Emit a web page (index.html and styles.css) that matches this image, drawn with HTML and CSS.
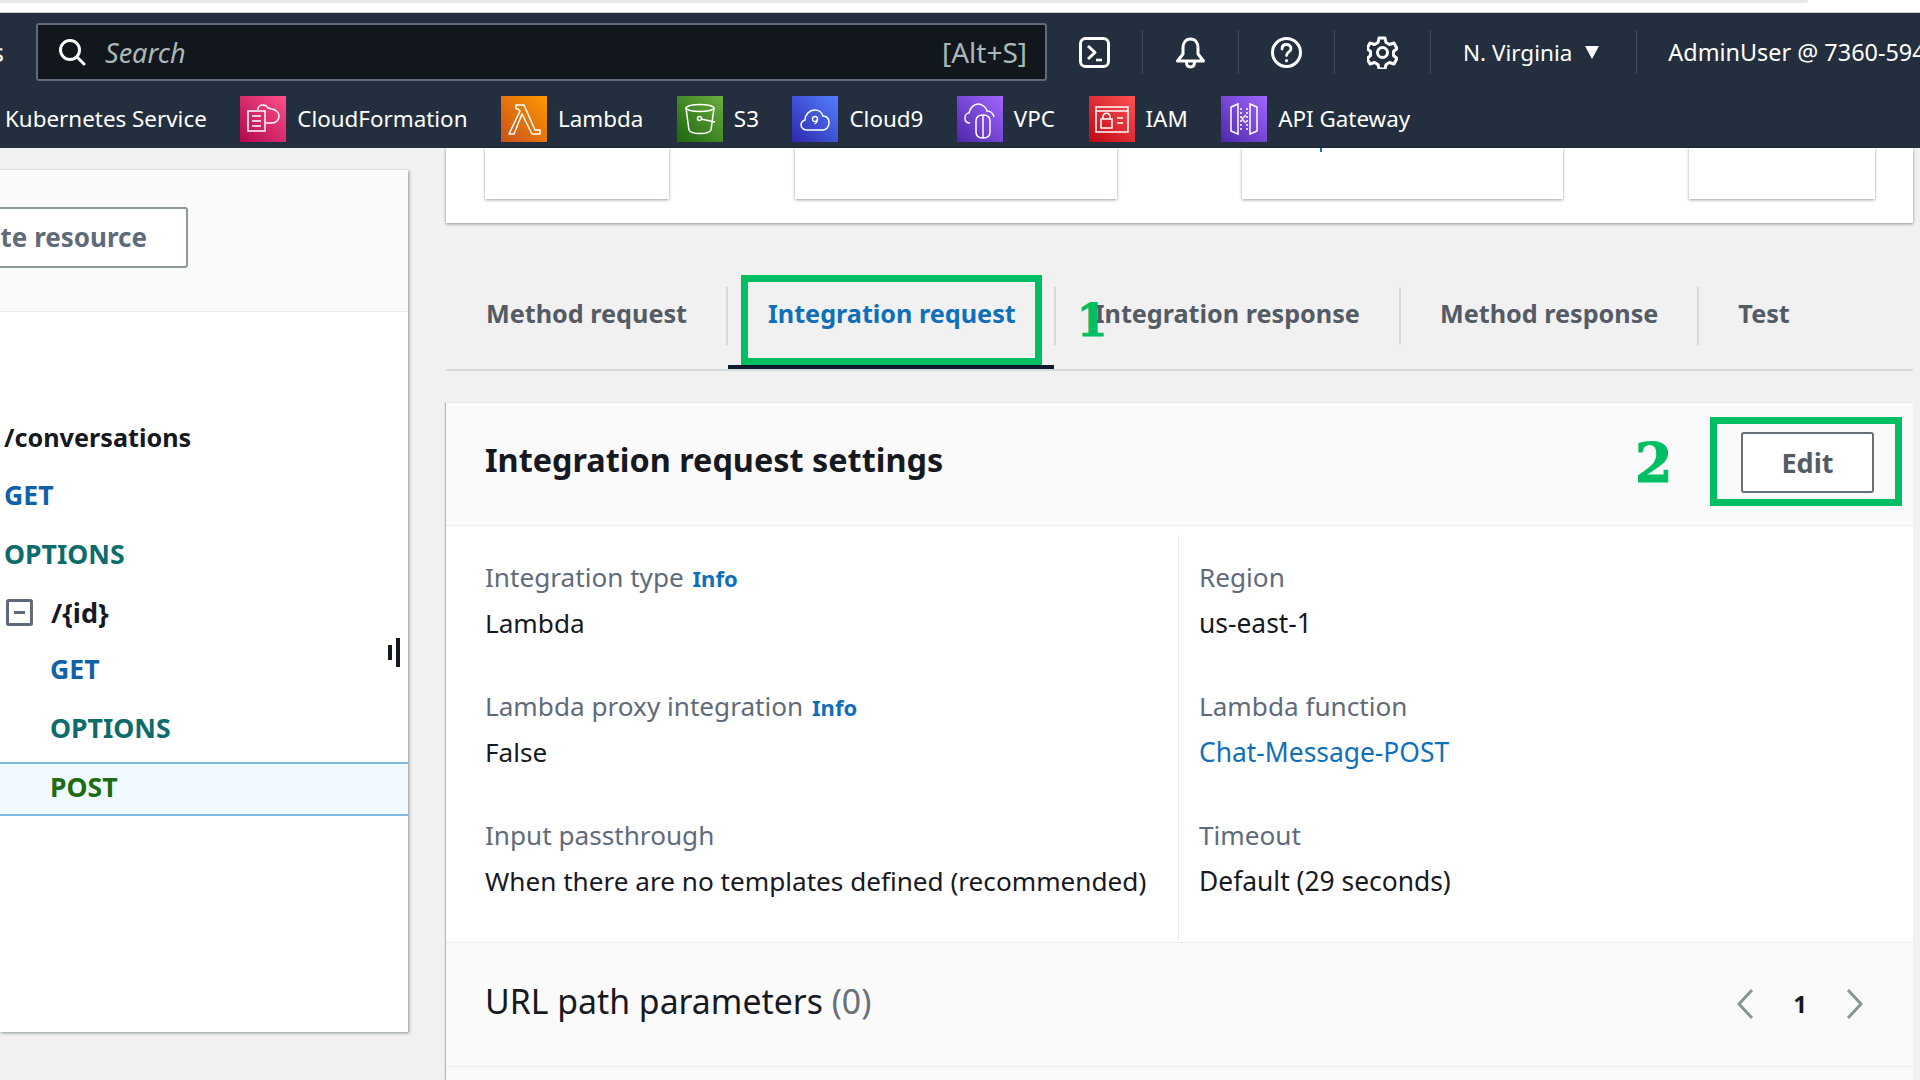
FILE: index.html
```html
<!DOCTYPE html>
<html lang="en">
<head>
    <meta charset="UTF-8">
    <meta name="viewport" content="width=device-width, initial-scale=1.0">
    <title>API Gateway - Integration request</title>
    <link rel="stylesheet" href="styles.css">
</head>
<body>
    <div class="top-strip"><div class="top-strip-bar"></div></div>

    <header class="console-nav">
        <div class="nav-row">
            <div class="nav-clip"><span>Services</span></div>
            <div class="search-box">
                <svg class="search-icon" viewBox="0 0 28 28" fill="none" stroke="#fff" stroke-width="3" stroke-linecap="round">
                    <circle cx="12" cy="12" r="9.5"/>
                    <path d="M19 19l7 7"/>
                </svg>
                <span class="search-text">Search</span>
                <span class="search-key">[Alt+S]</span>
            </div>
            <svg class="tool-icon" viewBox="0 0 31 31" fill="none" stroke="#fff" stroke-width="3" stroke-linejoin="round">
                <rect x="1.5" y="1.5" width="28" height="28" rx="5"/>
                <path d="M9 9l7 6.5-7 6.5"/>
                <path d="M17 23h6" stroke-width="2.6"/>
            </svg>
            <div class="nav-sep"></div>
            <svg class="tool-icon" viewBox="0 0 31 33" fill="none" stroke="#fff" stroke-width="3" stroke-linejoin="round">
                <path d="M15.500 3c-5 0-7.500 4-7.500 9v6l-5.500 7h26l-5.500-7v-6c0-5-2.500-9-7.500-9z"/>
                <path d="M11.500 26c0 3 1.500 5 4 5s4-2 4-5"/>
            </svg>
            <div class="nav-sep"></div>
            <svg class="tool-icon" viewBox="0 0 31 31" fill="none" stroke="#fff" stroke-width="3" stroke-linecap="round">
                <circle cx="15.500" cy="15.500" r="14"/>
                <path d="M11 12c0-3 2-4.500 4.500-4.500s4.500 1.500 4.500 4c0 3.500-4.500 3.500-4.500 7" stroke-width="2.800"/>
                <path d="M15.500 23.500v.2" stroke-width="3.200"/>
            </svg>
            <div class="nav-sep"></div>
            <svg class="tool-icon" viewBox="0 0 31 33" fill="none" stroke="#fff" stroke-width="3" stroke-linejoin="round">
                <path d="M12.500 2h6l1 4.500 3.500 2 4.500-1.500 3 5.500-3.500 3v4l3.500 3-3 5.500-4.500-1.500-3.500 2-1 4.500h-6l-1-4.500-3.500-2-4.500 1.500-3-5.500 3.500-3v-4l-3.500-3 3-5.500 4.500 1.500 3.500-2z" transform="translate(-.5 0)"/>
                <circle cx="15.500" cy="16.500" r="5"/>
            </svg>
            <div class="nav-sep"></div>
            <span class="nav-region">N. Virginia</span>
            <svg class="region-caret" viewBox="0 0 14 14"><path d="M0 1h14L7 14z" fill="#fff"/></svg>
            <div class="nav-sep nav-sep-user"></div>
            <span class="nav-user">AdminUser @ 7360-594</span>
        </div>
        <div class="nav-row nav-row-fav">
            <span class="fav-label fav-first">Kubernetes Service</span>

            <span class="fav-icon fav-pink">
                <svg viewBox="0 0 46 46" fill="none" stroke="#fff" stroke-width="1.500">
                    <path d="M8 15h17v20H8z"/>
                    <path d="M12 20h9M12 25h9M12 30h9"/>
                    <path d="M18 14v-1c0-2 2-4 5-4 2 0 4 1 5 3 1 0 2 0 3 1 4 0 8 3 8 7s-3 7-7 7h-6"/>
                </svg>
            </span>
            <span class="fav-label">CloudFormation</span>

            <span class="fav-icon fav-orange">
                <svg viewBox="0 0 46 46" fill="none" stroke="#fff" stroke-width="1.500" stroke-linejoin="round">
                    <path d="M15 9h8l11 25h5v4h-8L21 18l-8 20H8l11-23-2-2h-2z"/>
                </svg>
            </span>
            <span class="fav-label">Lambda</span>

            <span class="fav-icon fav-green">
                <svg viewBox="0 0 46 46" fill="none" stroke="#fff" stroke-width="1.500">
                    <ellipse cx="23" cy="12" rx="14" ry="3.500"/>
                    <path d="M9 12l3 22c1 2 6 3.500 11 3.500s10-1.500 11-3.500l3-22"/>
                    <circle cx="22.500" cy="22.500" r="2"/>
                    <path d="M24 23l14 3"/>
                </svg>
            </span>
            <span class="fav-label">S3</span>

            <span class="fav-icon fav-blue">
                <svg viewBox="0 0 46 46" fill="none" stroke="#fff" stroke-width="1.500">
                    <path d="M15 34c-3 0-6-2-6-5 0-2 1-4 4-5 0-5 4-10 10-10 4 0 7 3 8 6 4 0 6 3 6 7s-3 7-6 7z"/>
                    <circle cx="23" cy="23" r="2.500" stroke-width="1.300"/>
                    <path d="M25.500 23c0 3-1 4-3 5" stroke-width="1.300"/>
                </svg>
            </span>
            <span class="fav-label">Cloud9</span>

            <span class="fav-icon fav-purple">
                <svg viewBox="0 0 46 46" fill="none" stroke="#fff" stroke-width="1.500">
                    <path d="M13 27c-3 0-5-2-5-5 0-3 2-5 4-5 1-5 5-9 9-9s8 3 9 7c3 0 6 2 7 6"/>
                    <path d="M19 25c0-4 3-6 7-6s7 2 7 6v11c0 4-3 6-7 6s-7-2-7-6z"/>
                    <path d="M26 19v23"/>
                </svg>
            </span>
            <span class="fav-label">VPC</span>

            <span class="fav-icon fav-red">
                <svg viewBox="0 0 46 46" fill="none" stroke="#fff" stroke-width="1.500">
                    <path d="M7 11h32v25H7z"/>
                    <path d="M7 15h32"/>
                    <path d="M12 23h11v9H12z"/>
                    <path d="M14 23v-2c0-5 7-5 7 0v2"/>
                    <path d="M28 22h6M28 27h6"/>
                </svg>
            </span>
            <span class="fav-label">IAM</span>

            <span class="fav-icon fav-purple">
                <svg viewBox="0 0 46 46" fill="none" stroke="#fff" stroke-width="1.500">
                    <path d="M10 11l7-3v30l-7-3z"/>
                    <path d="M36 11l-7-3v30l7-3z"/>
                    <path d="M20 12v22M26 12v22" stroke-dasharray="2 2"/>
                    <path d="M25 19l-4 4 4 4"/>
                </svg>
            </span>
            <span class="fav-label">API Gateway</span>
        </div>
    </header>

    <main class="page">
        <aside class="resources">
            <div class="resources-head">
                <button class="res-button">Create resource</button>
            </div>
            <div class="tree">
                <div class="tree-row tree-path">/conversations</div>
                <div class="tree-row method method-get">GET</div>
                <div class="tree-row method method-options">OPTIONS</div>
                <div class="tree-row tree-path tree-toggle-row">
                    <svg class="tree-toggle" viewBox="0 0 27 27" fill="none" stroke="#5f6b7a" stroke-width="3">
                        <rect x="1.500" y="1.500" width="24" height="24" rx="1"/>
                        <path d="M8 13.500h11"/>
                    </svg>
                    /{id}
                </div>
                <div class="tree-row tree-sub method method-get">GET</div>
                <div class="tree-row tree-sub method method-options">OPTIONS</div>
                <div class="tree-row tree-sub method method-post tree-selected">POST</div>
                <div class="drag-handle"><span></span><span></span></div>
            </div>
        </aside>

        <section class="content">
            <div class="top-card">
                <div class="stub-box"></div>
                <div class="stub-box"></div>
                <div class="stub-box"><i class="stub-tick"></i></div>
                <div class="stub-box"></div>
            </div>

            <nav class="tabs">
                <a class="tab">Method request</a>
                <div class="tab-sep"></div>
                <a class="tab tab-active">Integration request<span class="mark-box mark-tab"></span></a>
                <div class="tab-sep"></div>
                <a class="tab">Integration response<span class="mark-num mark-one">1</span></a>
                <div class="tab-sep"></div>
                <a class="tab">Method response</a>
                <div class="tab-sep"></div>
                <a class="tab">Test</a>
            </nav>

            <div class="card">
                <div class="card-head">
                    <h2>Integration request settings</h2>
                    <span class="mark-num mark-two">2</span>
                    <span class="mark-box mark-edit"></span>
                    <button class="edit-button">Edit</button>
                </div>
                <div class="settings">
                    <div class="settings-col settings-left">
                        <div class="field">
                            <div class="field-label">Integration type <a class="info">Info</a></div>
                            <div class="field-value">Lambda</div>
                        </div>
                        <div class="field">
                            <div class="field-label">Lambda proxy integration <a class="info">Info</a></div>
                            <div class="field-value">False</div>
                        </div>
                        <div class="field">
                            <div class="field-label">Input passthrough</div>
                            <div class="field-value">When there are no templates defined (recommended)</div>
                        </div>
                    </div>
                    <div class="settings-col settings-right">
                        <div class="field">
                            <div class="field-label">Region</div>
                            <div class="field-value">us-east-1</div>
                        </div>
                        <div class="field">
                            <div class="field-label">Lambda function</div>
                            <div class="field-value"><a class="link">Chat-Message-POST</a></div>
                        </div>
                        <div class="field">
                            <div class="field-label">Timeout</div>
                            <div class="field-value">Default (29 seconds)</div>
                        </div>
                    </div>
                </div>
                <div class="params-head">
                    <h3>URL path parameters <span class="count">(0)</span></h3>
                    <div class="pager">
                        <svg viewBox="0 0 20 32" fill="none" stroke="#879596" stroke-width="3"><path d="M17 2L4 16l13 14"/></svg>
                        <span class="pager-num">1</span>
                        <svg viewBox="0 0 20 32" fill="none" stroke="#879596" stroke-width="3"><path d="M3 2l13 14L3 30"/></svg>
                    </div>
                </div>
                <div class="params-rest"></div>
            </div>
        </section>
    </main>
</body>
</html>
```

FILE: styles.css
```css
* {
    box-sizing: border-box;
}

html, body {
    margin: 0;
    padding: 0;
    height: 1080px;
    overflow: hidden;
}

body {
    width: 1920px;
    font-family: "Noto Sans", "Open Sans", sans-serif;
    font-size: 26.15px;
    color: #16191f;
    background-color: #f1f1f1;
}

/* strip of the browser above the console */
.top-strip {
    height: 13px;
    background-color: #fff;
    border-bottom: 1px solid #c9c9c9;
}

.top-strip-bar {
    width: 1808px;
    height: 3px;
    background-color: #e8e8e8;
    border-radius: 0 0 3px 0;
}

/* console header */
.console-nav {
    background-color: #232f3e;
    color: #fff;
}

.nav-row {
    display: flex;
    align-items: center;
    height: 78px;
    white-space: nowrap;
}

.nav-clip {
    display: flex;
    justify-content: flex-end;
    width: 4px;
    margin-right: 32px;
    overflow: hidden;
    flex-shrink: 0;
}

.search-box {
    display: flex;
    align-items: center;
    width: 1011px;
    height: 58px;
    margin-right: 32px;
    padding: 0 18px 0 20px;
    background-color: #12171e;
    border: 2px solid #5f6b7a;
    border-radius: 3px;
    flex-shrink: 0;
}

.search-icon {
    width: 28px;
    height: 28px;
    margin-right: 19px;
}

.search-text {
    flex: 1;
    font-size: 27px;
    font-style: italic;
    color: #aab7b8;
}

.search-key {
    font-size: 28px;
    color: #aab7b8;
}

.tool-icon {
    width: 31px;
    height: 33px;
    flex-shrink: 0;
}

.nav-sep {
    width: 1px;
    height: 44px;
    margin: 0 32px;
    background-color: #414d5c;
    flex-shrink: 0;
}

.nav-region {
    font-size: 22.5px;
}

.region-caret {
    width: 14px;
    height: 14px;
    margin-left: 13px;
    flex-shrink: 0;
}

.nav-sep-user {
    margin: 0 31px 0 37px;
}

.nav-user {
    font-size: 23.4px;
}

.nav-row-fav {
    height: 57px;
    padding-bottom: 2px;
    font-size: 22.4px;
}

.fav-icon {
    display: block;
    width: 46px;
    height: 46px;
    margin-right: 11px;
    flex-shrink: 0;
}

.fav-icon svg {
    display: block;
    width: 46px;
    height: 46px;
}

.fav-label {
    margin-right: 33.5px;
}

.fav-first {
    margin-left: 5px;
}

.fav-pink { background: linear-gradient(45deg, #b0084d, #ff4f8b); }
.fav-orange { background: linear-gradient(45deg, #c8511b, #ff9900); }
.fav-green { background: linear-gradient(45deg, #1b660f, #6cae3e); }
.fav-blue { background: linear-gradient(45deg, #2e27ad, #527fff); }
.fav-purple { background: linear-gradient(45deg, #4d27aa, #a166ff); }
.fav-red { background: linear-gradient(45deg, #bd0816, #ff5252); }

/* page body */
.page {
    display: flex;
    align-items: flex-start;
}

.resources {
    width: 408px;
    height: 862px;
    margin-top: 22px;
    margin-right: 38px;
    background-color: #fff;
    box-shadow: 1px 1px 3px rgba(0, 28, 36, 0.45);
    flex-shrink: 0;
}

.resources-head {
    display: flex;
    justify-content: flex-end;
    height: 142px;
    padding: 37px 220px 0 0;
    background-color: #fafafa;
    border-bottom: 1px solid #eaeded;
}

.res-button {
    height: 61px;
    padding: 0 39px 2px;
    font-family: inherit;
    font-size: 26px;
    font-weight: 700;
    color: #5f6b7a;
    background-color: #fff;
    border: 2px solid #8d9999;
    border-radius: 3px;
    white-space: nowrap;
    flex-shrink: 0;
}

.tree {
    position: relative;
    padding-top: 96px;
}

.tree-row {
    display: flex;
    align-items: center;
    height: 58.3px;
    padding-left: 4px;
    font-size: 25.2px;
    font-weight: 700;
}

.tree-path {
    color: #16191f;
}

.tree-toggle-row {
    font-size: 27px;
}

.tree-toggle {
    width: 27px;
    height: 27px;
    margin: 0 18px 0 2px;
}

.tree-sub {
    padding-left: 50px;
    padding-bottom: 2px;
}

.method {
    font-size: 26.6px;
}

.method-get { color: #0f62a8; }
.method-options { color: #0c6b6b; }
.method-post { color: #1d6b13; }

.tree-selected {
    height: 54px;
    margin-top: 4px;
    padding-bottom: 4px;
    background-color: #f1faff;
    border-top: 2px solid #7fbbe6;
    border-bottom: 2px solid #7fbbe6;
}

.drag-handle {
    position: absolute;
    left: 388px;
    top: 326px;
    display: flex;
    align-items: center;
    gap: 4px;
}

.drag-handle span {
    display: block;
    width: 4px;
    height: 15px;
    background-color: #16191f;
}

.drag-handle span + span {
    height: 29px;
}

.content {
    width: 1467px;
    flex-shrink: 0;
}

.top-card {
    display: grid;
    grid-template-columns: 184px 322px 321px 186px;
    justify-content: space-between;
    height: 75px;
    padding: 0 38px 24px 39px;
    background-color: #fff;
    box-shadow: 0 1px 3px rgba(0, 28, 36, 0.45);
}

.stub-box {
    position: relative;
    background-color: #fff;
    box-shadow: 0 1px 3px rgba(0, 28, 36, 0.4);
}

.stub-tick {
    position: absolute;
    left: 78px;
    top: 0;
    width: 2px;
    height: 4px;
    background-color: #0972d3;
}

/* tabs */
.tabs {
    display: flex;
    align-items: center;
    height: 96px;
    margin-top: 52px;
    border-bottom: 2px solid #d5dbdb;
    font-size: 25.2px;
    font-weight: 700;
    color: #545b64;
    white-space: nowrap;
}

.tab {
    position: relative;
    display: flex;
    align-items: center;
    height: 94px;
    padding: 0 39px 19px 39px;
}

.tab:first-child {
    padding-left: 40px;
}

.tab-active {
    padding: 0 38px 15px 40px;
    color: #0f6fb8;
    border-bottom: 4px solid #0f1b2a;
}

.tab-sep {
    width: 2px;
    height: 58px;
    margin-bottom: 12px;
    background-color: #d5dbdb;
    flex-shrink: 0;
}

/* green marks painted over the recording */
.mark-box {
    position: absolute;
    border: 7px solid #00bf63;
}

.mark-tab {
    left: 13px;
    top: 0;
    width: 301px;
    height: 90px;
}

.mark-num {
    position: absolute;
    font-family: "DejaVu Serif", serif;
    font-weight: 700;
    color: #00bf63;
    line-height: 1;
    -webkit-text-stroke: 1px #00bf63;
}

.mark-one {
    left: 21px;
    top: 24px;
    font-size: 44px;
}

.mark-two {
    left: 1189px;
    top: 33px;
    font-size: 54px;
}

/* settings card */
.card {
    margin-top: 32px;
    background-color: #fff;
    box-shadow: -1px 0 1px rgba(0, 28, 36, 0.25);
}

.card-head {
    position: relative;
    display: flex;
    align-items: center;
    justify-content: space-between;
    height: 123px;
    padding: 0 39px 4px 39px;
    background-color: #fafafa;
    border-bottom: 1px solid #eaeded;
}

.card-head h2 {
    margin: 0 0 6px;
    font-size: 32.4px;
    font-weight: 700;
}

.mark-edit {
    left: 1264px;
    top: 14px;
    width: 192px;
    height: 89px;
}

.edit-button {
    width: 133px;
    height: 61px;
    font-family: inherit;
    font-size: 27px;
    font-weight: 700;
    color: #545b64;
    background-color: #fff;
    border: 2px solid #687078;
    border-radius: 3px;
}

.settings {
    display: grid;
    grid-template-columns: 694px 1fr;
    height: 388px;
    margin-top: 9px;
    padding-left: 39px;
}

.settings-col {
    padding-top: 19px;
}

.settings-left {
    border-right: 1px solid #eaeded;
}

.settings-right {
    padding-left: 20px;
}

.settings-right .field-value {
    font-size: 26.4px;
}

.field {
    margin-bottom: 37px;
}

.field-label {
    line-height: 46px;
    color: #5f6b7a;
}

.field-value {
    line-height: 46px;
    color: #16191f;
}

.info {
    margin-left: 2px;
    font-size: 22px;
    font-weight: 700;
    line-height: 1;
    color: #0f6fb8;
}

.link {
    color: #0f6fb8;
}

.params-head {
    display: flex;
    align-items: center;
    justify-content: space-between;
    height: 125px;
    margin-top: 19px;
    padding: 0 48px 8px 39px;
    background-color: #fafafa;
    border-top: 1px solid #eaeded;
    border-bottom: 1px solid #eaeded;
}

.params-head h3 {
    margin: 0;
    font-size: 33.8px;
    font-weight: 400;
}

.count {
    color: #687078;
}

.pager {
    display: flex;
    align-items: center;
    gap: 38px;
    margin-top: 6px;
}

.pager svg {
    width: 20px;
    height: 32px;
}

.pager-num {
    font-size: 24px;
    font-weight: 700;
}

.params-rest {
    height: 20px;
    background-color: #fafafa;
}
```
